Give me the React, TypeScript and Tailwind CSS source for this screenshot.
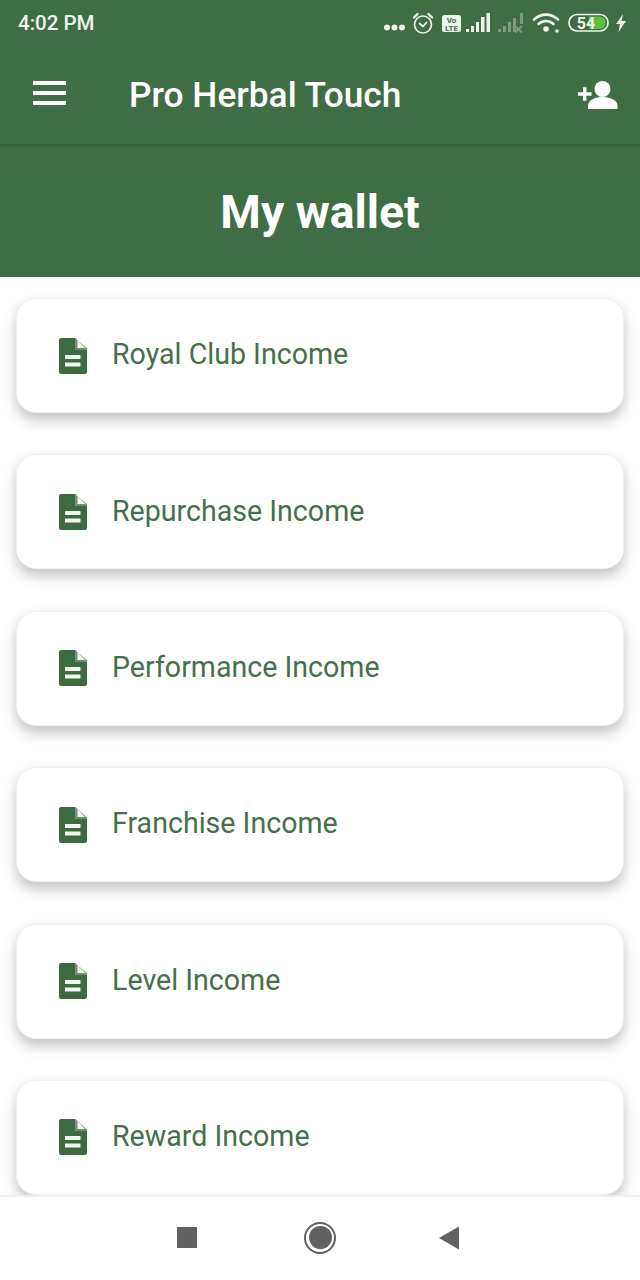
import React from "react";

const items = ["Royal Club Income", "Repurchase Income", "Performance Income", "Franchise Income", "Level Income", "Reward Income"];

function DocIcon() {
  return (
    <svg width="28" height="36" viewBox="0 0 28 36" className="shrink-0">
      <path d="M2 0H16.500V12H28V34a2 2 0 0 1-2 2H2a2 2 0 0 1-2-2V2a2 2 0 0 1 2-2Z" fill="#3d6b41" />
      <path d="M16.500 0.300L28 10.500V12H16.500Z" fill="#3d6b41" opacity="0.75" />
      <path d="M18.500 2.300L26 10H18.500Z" fill="#f4f7f4" />
      <rect x="6" y="17" width="15.500" height="4" fill="#f2f6f2" />
      <rect x="6" y="24.500" width="15.500" height="4" fill="#f2f6f2" />
    </svg>
  );
}

function StatusIcons() {
  return (
    <svg width="250" height="26" viewBox="0 0 250 26" className="shrink-0">
      <g fill="#eef3ee">
        <circle cx="10" cy="18.500" r="3" />
        <circle cx="17.500" cy="18.500" r="3" />
        <circle cx="25" cy="18.500" r="3" />
      </g>
      <g fill="none" stroke="#eef3ee" strokeWidth="1.700" strokeLinecap="round">
        <circle cx="46" cy="15.500" r="8.500" />
        <path d="M42.500 14.500l3.500 3 3.500-4" />
        <path d="M37 8.500l3.500-3.500M55 8.500l-3.500-3.500" strokeWidth="2.400" />
      </g>
      <rect x="65" y="6" width="19" height="17" rx="2.500" fill="#eef3ee" />
      <text x="74.500" y="13.500" textAnchor="middle" fontSize="8" fontWeight="700" fill="#3f6e44" fontFamily="Roboto, sans-serif">Vo</text>
      <text x="74.500" y="21.500" textAnchor="middle" fontSize="8" fontWeight="700" fill="#3f6e44" fontFamily="Roboto, sans-serif">LTE</text>
      <g fill="#eef3ee">
        <rect x="89" y="20" width="3" height="3" />
        <rect x="94" y="17" width="3" height="6" />
        <rect x="99" y="13" width="3" height="10" />
        <rect x="104" y="8" width="3.500" height="15" />
        <rect x="109.500" y="4" width="3.500" height="19" />
      </g>
      <g fill="#eef3ee" opacity="0.35">
        <rect x="121" y="20" width="3" height="3" />
        <rect x="126" y="17" width="3" height="6" />
        <rect x="131" y="13" width="3" height="10" />
        <rect x="136" y="9" width="3" height="14" />
        <rect x="143" y="4" width="3" height="11" />
        <path d="M138 17l7 6.500M145 17l-7 6.500" stroke="#eef3ee" strokeWidth="2" />
      </g>
      <g fill="none" stroke="#eef3ee" strokeWidth="2.600" strokeLinecap="round">
        <path d="M157 10.500c7-6.500 17-6.500 24 0" />
        <path d="M161.500 15c4.500-4 10.500-4 15 0" />
      </g>
      <circle cx="169" cy="20" r="2.800" fill="#eef3ee" />
      <circle cx="180" cy="22" r="1.800" fill="#eef3ee" />
      <rect x="192" y="5.500" width="39" height="16.500" rx="8" fill="none" stroke="#eef3ee" strokeWidth="1.700" />
      <path d="M212 7.500h10.500a6.200 6.200 0 0 1 0 12.500H212Z" fill="#5fc13d" />
      <text x="209" y="19.500" textAnchor="middle" fontSize="16" fontWeight="700" fill="#eef3ee" fontFamily="Roboto, sans-serif">54</text>
      <path d="M246 5l-7 10h4l-1.500 8 7.500-11h-4.500Z" fill="#eef3ee" />
    </svg>
  );
}

export default function App() {
  return (
    <div className="relative flex h-[1280px] w-[640px] flex-col overflow-hidden bg-white font-['Roboto',sans-serif]">
      <div className="z-10 flex h-[144px] shrink-0 flex-col bg-[#3f6e44] shadow-[0_2px_4px_rgba(0,0,0,0.18)]">
        <div className="flex h-[44px] items-center justify-between pl-[18px] pr-[13px]">
          <span className="mt-[2px] text-[20.500px] font-medium leading-none text-[#eef3ee]">4:02 PM</span>
          <StatusIcons />
        </div>
        <div className="flex flex-1 items-center pl-[33px] pr-[22px] pb-[2px]">
          <div className="flex w-[33px] flex-col gap-[6.500px]">
            <div className="h-[3.500px] bg-white" />
            <div className="h-[3.500px] bg-white" />
            <div className="h-[3.500px] bg-white" />
          </div>
          <span className="ml-[63px] mt-[6px] flex-1 text-[35.300px] font-medium leading-none text-white">Pro Herbal Touch</span>
          <svg width="40" height="30" viewBox="0 0 40 30" className="mt-[3px]">
            <circle cx="24.500" cy="9" r="8" fill="#fff" />
            <path d="M10 29v-3.500C10 19.500 18.500 17 24.500 17S39.500 19.500 39.500 25.500V29Z" fill="#fff" />
            <path d="M0 14h13.500M6.700 7.300v13.400" stroke="#fff" strokeWidth="3.400" />
          </svg>
        </div>
      </div>
      <div className="flex h-[133px] shrink-0 items-center justify-center bg-[#3f6e44]">
        <h1 className="mt-[3px] text-[46.300px] font-bold leading-none text-white">My wallet</h1>
      </div>
      <div className="flex min-h-0 flex-1 flex-col gap-[41.400px] overflow-hidden px-4 pt-[21px]">
        {items.map((t) => (
          <div key={t} className="flex h-[115px] shrink-0 items-center gap-[25px] rounded-[20px] border border-[#f1f1f1] bg-white pl-[42px] shadow-[0_7px_14px_rgba(0,0,0,0.24)]">
            <DocIcon />
            <span className="mb-[2px] text-[28.600px] leading-none text-[#44704a]">{t}</span>
          </div>
        ))}
      </div>
      <div className="z-10 flex h-[85px] shrink-0 items-center border-t-2 border-[#f0f0f0] bg-white pb-[2px]">
        <div className="ml-[177px] h-[21px] w-[20px] bg-[#616161]" />
        <div className="ml-[107px] flex h-[32px] w-[32px] items-center justify-center rounded-full border-2 border-[#616161]">
          <div className="h-[23px] w-[23px] rounded-full bg-[#616161]" />
        </div>
        <svg width="21" height="24" viewBox="0 0 21 24" className="ml-[103px]">
          <path d="M0 12L20 0.500V23.500Z" fill="#616161" />
        </svg>
      </div>
    </div>
  );
}
